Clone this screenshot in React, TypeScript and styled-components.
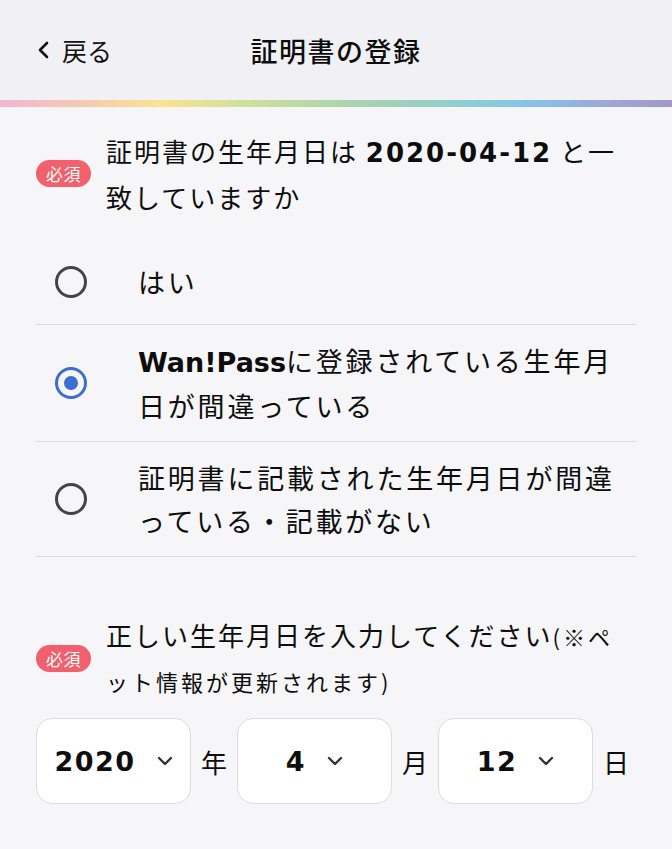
import React, { useState } from "react";
import styled, { createGlobalStyle } from "styled-components";

const GlobalStyle = createGlobalStyle`
  html, body {
    margin: 0;
    padding: 0;
    background: #f6f6f8;
  }
  body {
    font-family: "Noto Sans CJK JP", "Noto Sans", sans-serif;
    color: #0d0d0d;
  }
  * { box-sizing: border-box; }
`;

const Page = styled.div`
  width: 672px;
  min-height: 849px;
  background: #f6f6f8;
`;

const Header = styled.header`
  height: 100px;
  background: #f1f1f5;
  display: grid;
  grid-template-columns: 1fr auto 1fr;
  align-items: center;
  padding: 0 36px;
`;

const BackButton = styled.button`
  justify-self: start;
  display: flex;
  align-items: center;
  gap: 13px;
  background: none;
  border: none;
  padding: 0 0 0 2px;
  font-family: inherit;
  font-size: 25px;
  color: #111;
  cursor: pointer;
`;

const Title = styled.h1`
  margin: 0;
  font-size: 27px;
  font-weight: 500;
  letter-spacing: 1.5px;
`;

const RainbowBar = styled.div`
  height: 7px;
  background: linear-gradient(
    90deg,
    #f1b7cf 0%,
    #f6c9b3 12%,
    #fae38d 24%,
    #cfe19c 36%,
    #b3d7a6 48%,
    #9ed0bb 60%,
    #8fcfd0 68%,
    #84c5ea 78%,
    #99acdc 88%,
    #a398c6 100%
  );
`;

const Content = styled.main`
  padding: 22px 36px 40px;
`;

const QuestionRow = styled.div<{ $spaceTop?: number }>`
  display: flex;
  align-items: center;
  gap: 15px;
  margin-top: ${(p) => p.$spaceTop ?? 0}px;
`;

const Badge = styled.span`
  flex-shrink: 0;
  height: 27px;
  padding: 0 10px;
  border-radius: 14px;
  background: #f1606c;
  color: #fff;
  font-size: 17px;
  line-height: 27px;
  letter-spacing: 0.5px;
`;

const QuestionText = styled.p`
  margin: 0;
  font-size: 26px;
  line-height: 43px;
  letter-spacing: 2px;
`;

const DateStrong = styled.b`
  font-family: "DejaVu Sans", "Noto Sans CJK JP", sans-serif;
  font-weight: 700;
  letter-spacing: 2px;
`;

const BrandStrong = styled.b`
  font-family: "DejaVu Sans", "Noto Sans CJK JP", sans-serif;
  font-weight: 700;
  letter-spacing: 0;
`;

const Note = styled.span`
  font-size: 22px;
  letter-spacing: 3px;
`;

const OptionList = styled.div`
  margin-top: 21px;
`;

const OptionRow = styled.label`
  display: flex;
  align-items: center;
  min-height: 86px;
  padding: 14px 0;
  border-bottom: 1px solid #dcdce1;
  cursor: pointer;
`;

const Radio = styled.span<{ $checked: boolean }>`
  flex-shrink: 0;
  width: 32px;
  height: 32px;
  margin: 0 51px 0 19px;
  border-radius: 50%;
  border: 3px solid ${(p) => (p.$checked ? "#3b6ed0" : "#444")};
  display: flex;
  align-items: center;
  justify-content: center;
  &::after {
    content: "";
    width: 14px;
    height: 14px;
    border-radius: 50%;
    background: #3b6ed0;
    display: ${(p) => (p.$checked ? "block" : "none")};
  }
`;

const OptionText = styled.span`
  font-size: 27px;
  line-height: 43px;
  letter-spacing: 2.8px;
`;

const DateRow = styled.div`
  display: flex;
  align-items: center;
  gap: 10px;
  margin-top: 15px;
`;

const SelectBox = styled.div`
  width: 155px;
  height: 86px;
  background: #fff;
  border: 1px solid #dcdcdf;
  border-radius: 16px;
  display: flex;
  align-items: center;
  justify-content: center;
  gap: 21px;
  cursor: pointer;
`;

const SelectValue = styled.span`
  font-family: "DejaVu Sans", "Noto Sans CJK JP", sans-serif;
  font-size: 27px;
  font-weight: 700;
  letter-spacing: 1.5px;
`;

const UnitLabel = styled.span`
  font-size: 26px;
  width: 26px;
  text-align: center;
`;

const ChevronDown = () => (
  <svg width="16" height="10" viewBox="0 0 16 10" fill="none">
    <path d="M2 2l6 6 6-6" stroke="#333" strokeWidth="2.4" strokeLinecap="round" strokeLinejoin="round" />
  </svg>
);

const ChevronLeft = () => (
  <svg width="11" height="18" viewBox="0 0 11 18" fill="none">
    <path d="M9 2L2 9l7 7" stroke="#111" strokeWidth="2.6" strokeLinecap="round" strokeLinejoin="round" />
  </svg>
);

const options: React.ReactNode[] = [
  "はい",
  (
    <>
      <BrandStrong>Wan!Pass</BrandStrong>に登録されている生年月日が間違っている
    </>
  ),
  "証明書に記載された生年月日が間違っている・記載がない",
];

const dateParts = [
  { value: "2020", unit: "年" },
  { value: "4", unit: "月" },
  { value: "12", unit: "日" },
];

export default function App() {
  const [selected, setSelected] = useState(1);
  return (
    <>
      <GlobalStyle />
      <Page>
        <Header>
          <BackButton>
            <ChevronLeft />
            戻る
          </BackButton>
          <Title>証明書の登録</Title>
          <span />
        </Header>
        <RainbowBar />
        <Content>
          <QuestionRow>
            <Badge>必須</Badge>
            <QuestionText>
              証明書の生年月日は <DateStrong>2020-04-12</DateStrong> と一致していますか
            </QuestionText>
          </QuestionRow>
          <OptionList>
            {options.map((opt, i) => (
              <OptionRow key={i} onClick={() => setSelected(i)}>
                <Radio $checked={selected === i} />
                <OptionText>{opt}</OptionText>
              </OptionRow>
            ))}
          </OptionList>
          <QuestionRow $spaceTop={56}>
            <Badge>必須</Badge>
            <QuestionText>
              正しい生年月日を入力してください<Note>(※ペット情報が更新されます)</Note>
            </QuestionText>
          </QuestionRow>
          <DateRow>
            {dateParts.map((d) => (
              <React.Fragment key={d.unit}>
                <SelectBox>
                  <SelectValue>{d.value}</SelectValue>
                  <ChevronDown />
                </SelectBox>
                <UnitLabel>{d.unit}</UnitLabel>
              </React.Fragment>
            ))}
          </DateRow>
        </Content>
      </Page>
    </>
  );
}
